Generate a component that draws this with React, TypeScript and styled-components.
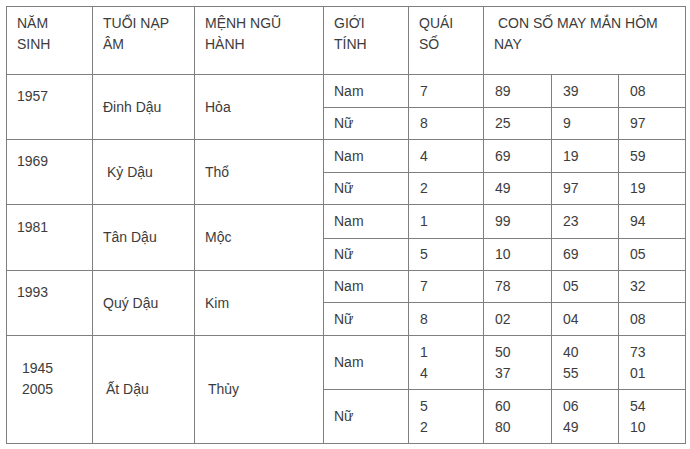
import React from 'react';
import styled, { createGlobalStyle } from 'styled-components';

const GlobalStyle = createGlobalStyle`
    body {
        margin: 0;
        background: #ffffff;
        font-family: Arial, 'Liberation Sans', sans-serif;
    }
`;

const Wrapper = styled.div`
    padding: 6px 0 0 6px;
`;

const Table = styled.table`
    width: 679px;
    table-layout: fixed;
    border-collapse: collapse;
    font-size: 14px;
    line-height: 21px;
    color: #3c3c3c;
`;

const Col = styled.col<{ $w: number }>`
    width: ${(p) => p.$w}px;
`;

const HeadCell = styled.td`
    border: 1px solid #7f7f7f;
    vertical-align: top;
    padding: 6px 10px 0 10px;
    text-transform: uppercase;
`;

const HeadIndent = styled.span`
    padding-left: 4px;
`;

const Cell = styled.td<{ $indent?: number; $trail?: number }>`
    border: 1px solid #7f7f7f;
    vertical-align: middle;
    padding: 0 6px 0 ${(p) => 10 + (p.$indent || 0)}px;
    padding-bottom: ${(p) => (p.$trail || 0) * 21}px;
    white-space: nowrap;
`;

const NumCell = styled(Cell)`
    padding-left: 11px;
`;

const Row = styled.tr<{ $h: number }>`
    height: ${(p) => p.$h}px;
`;

type Sub = { gender: string; qs: string[]; nums: string[][] };
type Group = {
    years: string[];
    yearIndent?: number;
    tuoi: string;
    tuoiIndent?: number;
    menh: string;
    menhIndent?: number;
    heights: number[];
    subs: Sub[];
};

const widths = [86, 102, 129, 85, 75, 68, 67, 67];

const groups: Group[] = [
    {
        years: ['1957'],
        tuoi: 'Đinh Dậu',
        menh: 'Hỏa',
        heights: [33, 32],
        subs: [
            { gender: 'Nam', qs: ['7'], nums: [['89'], ['39'], ['08']] },
            { gender: 'Nữ', qs: ['8'], nums: [['25'], ['9'], ['97']] },
        ],
    },
    {
        years: ['1969'],
        tuoi: 'Kỷ Dậu',
        tuoiIndent: 4,
        menh: 'Thổ',
        heights: [33, 32],
        subs: [
            { gender: 'Nam', qs: ['4'], nums: [['69'], ['19'], ['59']] },
            { gender: 'Nữ', qs: ['2'], nums: [['49'], ['97'], ['19']] },
        ],
    },
    {
        years: ['1981'],
        tuoi: 'Tân Dậu',
        menh: 'Mộc',
        heights: [34, 32],
        subs: [
            { gender: 'Nam', qs: ['1'], nums: [['99'], ['23'], ['94']] },
            { gender: 'Nữ', qs: ['5'], nums: [['10'], ['69'], ['05']] },
        ],
    },
    {
        years: ['1993'],
        tuoi: 'Quý Dậu',
        menh: 'Kim',
        heights: [32, 33],
        subs: [
            { gender: 'Nam', qs: ['7'], nums: [['78'], ['05'], ['32']] },
            { gender: 'Nữ', qs: ['8'], nums: [['02'], ['04'], ['08']] },
        ],
    },
    {
        years: ['1945', '2005'],
        yearIndent: 5,
        tuoi: 'Ất Dậu',
        tuoiIndent: 3,
        menh: 'Thủy',
        menhIndent: 3,
        heights: [54, 54],
        subs: [
            { gender: 'Nam', qs: ['1', '4'], nums: [['50', '37'], ['40', '55'], ['73', '01']] },
            { gender: 'Nữ', qs: ['5', '2'], nums: [['60', '80'], ['06', '49'], ['54', '10']] },
        ],
    },
];

const Line = styled.div``;

const Lines: React.FC<{ items: string[] }> = ({ items }) => (
    <>
        {items.map((t, i) => (
            <Line key={i}>{t}</Line>
        ))}
    </>
);

export default function App() {
    return (
        <>
            <GlobalStyle />
            <Wrapper>
                <Table>
                    <colgroup>
                        {widths.map((w, i) => (
                            <Col key={i} $w={w} />
                        ))}
                    </colgroup>
                    <tbody>
                        <Row $h={68}>
                            <HeadCell>Năm sinh</HeadCell>
                            <HeadCell>Tuổi nạp âm</HeadCell>
                            <HeadCell>Mệnh ngũ hành</HeadCell>
                            <HeadCell>Giới tính</HeadCell>
                            <HeadCell>Quái số</HeadCell>
                            <HeadCell colSpan={3}>
                                <HeadIndent>Con số may mắn hôm</HeadIndent> nay
                            </HeadCell>
                        </Row>
                        {groups.map((g) =>
                            g.subs.map((s, si) => (
                                <Row $h={g.heights[si]} key={g.years[0] + si}>
                                    {si === 0 && (
                                        <>
                                            <Cell rowSpan={2} $indent={g.yearIndent} $trail={1}>
                                                <Lines items={g.years} />
                                            </Cell>
                                            <Cell rowSpan={2} $indent={g.tuoiIndent}>
                                                {g.tuoi}
                                            </Cell>
                                            <Cell rowSpan={2} $indent={g.menhIndent}>
                                                {g.menh}
                                            </Cell>
                                        </>
                                    )}
                                    <Cell>{s.gender}</Cell>
                                    <NumCell>
                                        <Lines items={s.qs} />
                                    </NumCell>
                                    {s.nums.map((n, ni) => (
                                        <NumCell key={ni}>
                                            <Lines items={n} />
                                        </NumCell>
                                    ))}
                                </Row>
                            ))
                        )}
                    </tbody>
                </Table>
            </Wrapper>
        </>
    );
}
